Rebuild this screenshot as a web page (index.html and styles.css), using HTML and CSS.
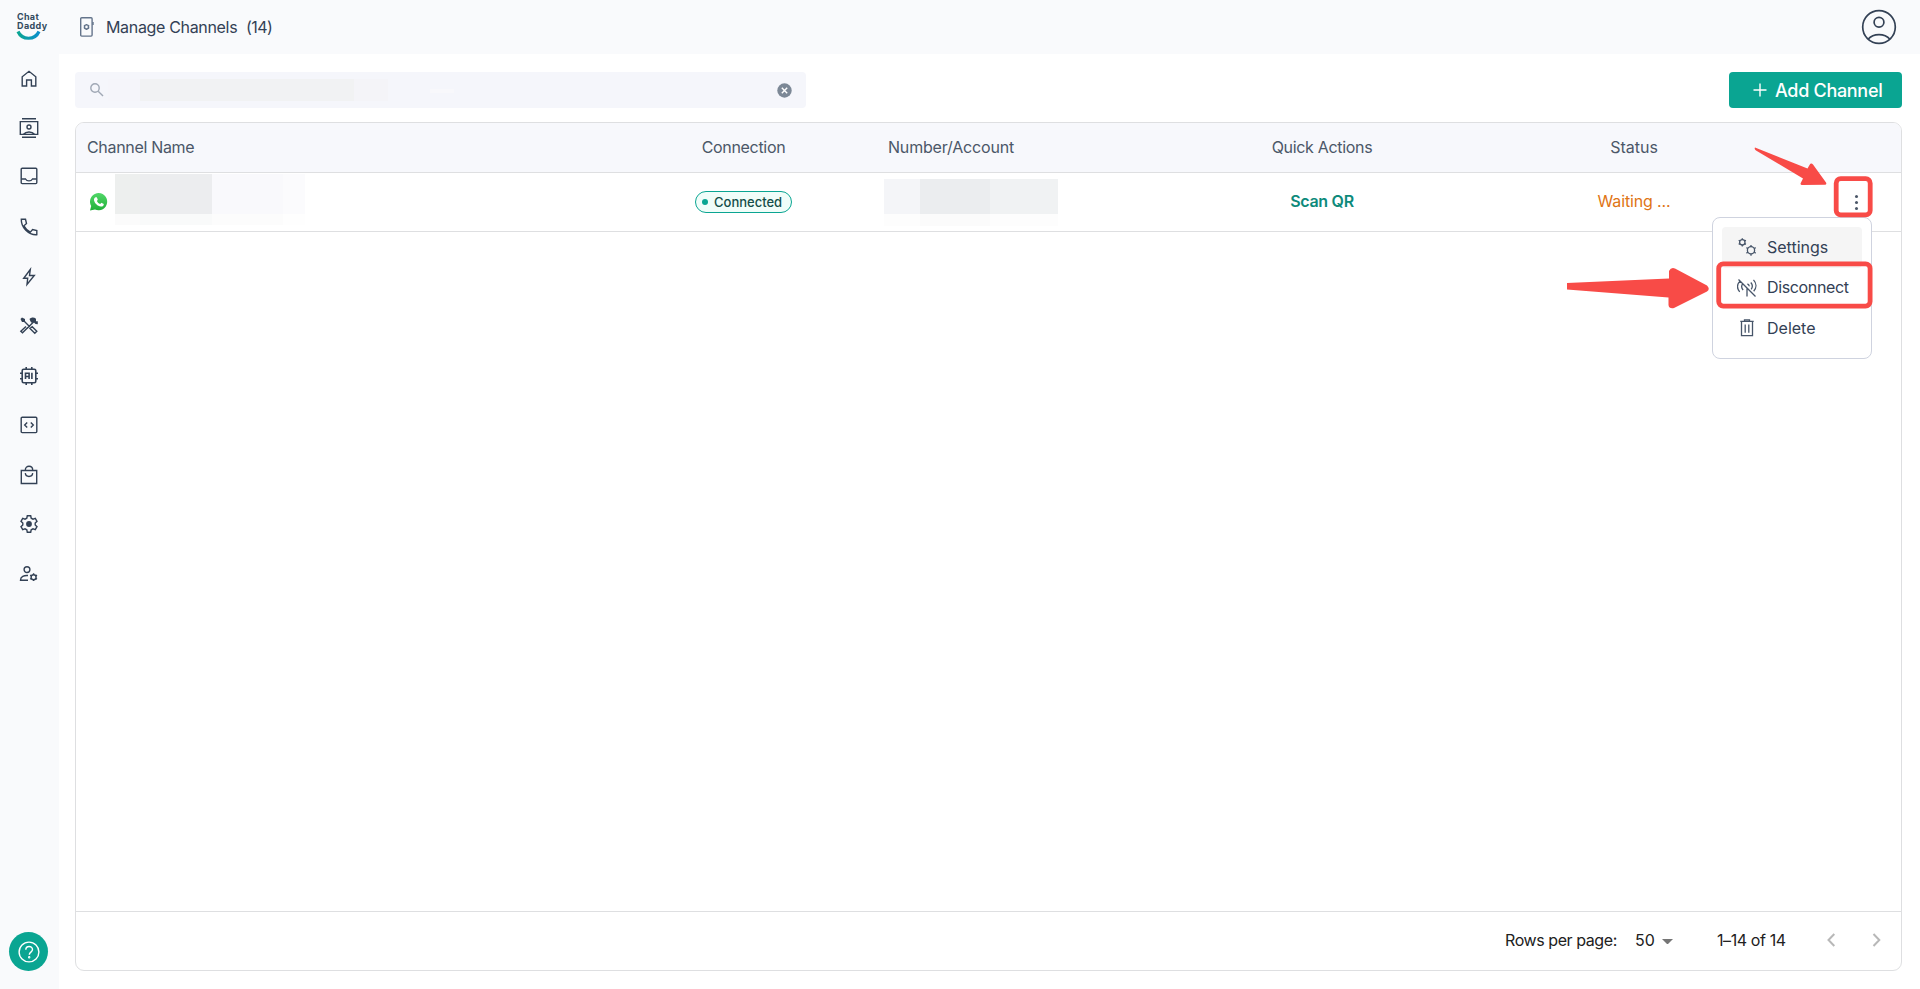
FILE: index.html
```html
<!DOCTYPE html>
<html lang="en">
<head>
<meta charset="utf-8">
<title>Manage Channels</title>
<link rel="stylesheet" href="styles.css">
</head>
<body>
<div class="app">
  <aside class="sidebar">
    <div class="logo">
      <span class="logo-chat">Chat</span>
      <span class="logo-daddy">Daddy</span>
      <svg class="smile" width="26" height="11" viewBox="0 0 26 11"><defs><linearGradient id="g"><stop offset="0" stop-color="#0aa592"/><stop offset="1" stop-color="#0c8fcb"/></linearGradient></defs><path d="M2 1.500C6 10.500 19 10.500 23 1.500" fill="none" stroke="url(#g)" stroke-width="3.200"/></svg>
    </div>
    <nav class="nav">
      <a class="item"><svg viewBox="0 0 20 20"><path d="M3.200 17V7.800L10 2.300l6.800 5.500V17h-4.400v-6H7.600v6z"/></svg></a>
      <a class="item contacts"><svg viewBox="0 0 20 20"><path d="M3 .8h14M3 19.200h14M1.300 3.600h17.400v12.800H1.300zM4.500 16.200c2.500-3 8.500-3 11 0"/><circle cx="10" cy="9" r="2"/></svg></a>
      <a class="item inbox"><svg viewBox="0 0 20 20"><rect x="2.200" y="2.200" width="15.600" height="15.400" rx="1"/><path d="M2.200 13h4.300c1.500 2.500 5.500 2.500 7 0h4.300"/></svg></a>
      <a class="item"><svg viewBox="0 0 20 20"><path d="M2.300 2.300h4.200l1 4.300-2.600 2.200a15 15 0 0 0 6.400 6.300l2.300-2.600 4.200 1v4.200C9.500 18.200 2 10.500 2.300 2.300z"/></svg></a>
      <a class="item"><svg viewBox="0 0 20 20"><path d="M11.300 2.500L4.700 11.300h4L8 17.500l7.300-9h-4.800z"/></svg></a>
      <a class="item"><svg viewBox="0 0 20 20"><path d="M4.500 4.500L11 11M15 5.500l-7 7M8.800 11.500l-5.300 5.300-1.700-1.600L7 10.500M11 12.500l4.800 4.800 2-2-4.600-4.500z"/><path class="solid" d="M1.500 3L3 1.500 6 3v2l-1 1H3zM10.500 3c2-2 4.500-2 6.500-.2v2.400h1.800v3L16.500 8l-2-2-1.500 1-1.500-1.500z"/></svg></a>
      <a class="item chip-icon"><svg viewBox="0 0 20 20"><rect x="3.200" y="3.200" width="13.600" height="13.600" rx="1.500"/><path d="M7.200 1v2M12.800 1v2M7.200 17v2M12.800 17v2M1 7.200h2M1 12.800h2M17 7.200h2M17 12.800h2"/><path d="M6.500 13V7.200h3.600V13M6.500 10.500h3.600M12.900 6.800V13"/></svg></a>
      <a class="item"><svg viewBox="0 0 20 20"><rect x="2.200" y="2.200" width="15.600" height="15.400" rx="1"/><path d="M8.200 7.400L5.700 9.900l2.500 2.500M11.800 7.400l2.500 2.500-2.500 2.500"/></svg></a>
      <a class="item"><svg viewBox="0 0 20 20"><path d="M2.300 5.500h15.400v13H2.300zM6.300 5.200c0-5.200 7.400-5.200 7.400 0M6.300 8.200c.5 4.300 6.900 4.300 7.400 0"/></svg></a>
      <a class="item"><svg viewBox="0 0 20 20"><path d="M8.300 1.800h3.400l.5 2.400 1.800 1 2.300-.8L18 7.300 16.200 9v2l1.800 1.700-1.700 2.900-2.300-.8-1.800 1-.5 2.400H8.300l-.5-2.400-1.800-1-2.300.8L2 12.700 3.800 11V9L2 7.300l1.700-2.900 2.300.8 1.800-1z"/><circle class="solid" cx="10" cy="10" r="2.900"/></svg></a>
      <a class="item"><svg viewBox="0 0 20 20"><circle cx="8" cy="5.600" r="2.900"/><path d="M9 11.500c-4-.3-7.500 1-7.500 4.700H9"/><circle cx="14.600" cy="13.200" r="2.500"/><path d="M14.600 9.300v1.300M14.600 15.800v1.300M11.200 11.200l1.200.7M16.800 14.500l1.200.7M11.200 15.200l1.200-.7M16.800 11.900l1.200-.7"/></svg></a>
    </nav>
    <div class="help"><svg width="22" height="22" viewBox="0 0 22 22"><circle cx="11" cy="11" r="9.900"/><path d="M7.800 8.700c0-4.300 6.700-4.200 6.700-.2 0 2.500-3.200 2.700-3.200 5.200"/><circle cx="11.200" cy="16.200" r=".5"/></svg></div>
  </aside>
  <div class="main">
    <header class="topbar">
      <svg class="device" width="16" height="22" viewBox="0 0 16 22"><rect x="1.700" y="1.700" width="11.400" height="18.400" rx="1"/><path d="M14 6v3"/><circle cx="7.500" cy="10.900" r="2"/><path d="M7.500 7.900v1M7.500 12.900v1M4.900 9.400l.9.500M9.300 11.900l.9.500M4.900 12.400l.9-.5M9.300 9.900l.9-.5"/></svg>
      <h1 class="title">Manage Channels</h1>
      <span class="count">(14)</span>
      <svg class="avatar" width="36" height="36" viewBox="0 0 36 36"><circle cx="18" cy="18" r="16.300"/><circle cx="18" cy="13.300" r="4.900"/><path d="M7 30.200c5.500-6 16.500-6 22 0"/></svg>
    </header>
    <main class="content">
      <div class="toolbar">
        <div class="search">
          <svg width="14" height="14" viewBox="0 0 14 14"><circle cx="5" cy="5" r="4.200"/><path d="M8.200 8.200l4.800 4.800"/></svg>
          <div class="mask mask-search"><i></i><i></i><i></i><i></i></div>
          <svg class="clear" width="15" height="15" viewBox="0 0 15 15"><circle cx="7.500" cy="7.500" r="7.200"/><path d="M4.800 4.800l5.400 5.400M10.200 4.800l-5.400 5.400"/></svg>
        </div>
        <button class="add"><svg width="14" height="14" viewBox="0 0 14 14"><path d="M7 .5v13M.5 7h13"/></svg><span>Add Channel</span></button>
      </div>
      <section class="table">
        <div class="row head">
          <div class="cell"><span class="t-name">Channel Name</span></div>
          <div class="cell mid"><span class="t-conn">Connection</span></div>
          <div class="cell"><span class="t-num">Number/Account</span></div>
          <div class="cell mid"><span class="t-quick">Quick Actions</span></div>
          <div class="cell mid"><span class="t-status">Status</span></div>
          <div></div>
        </div>
        <div class="row data">
          <div class="cell name">
            <svg width="20" height="20" viewBox="0 0 20 20"><defs><linearGradient id="w" x2="0" y2="1"><stop stop-color="#52d769"/><stop offset="1" stop-color="#20b038"/></linearGradient></defs><path d="M1 18.600l1.200-4.500A8.600 8.600 0 1 1 6 17.500z" fill="url(#w)"/><path d="M6.500 5.300h1.300l1 2.400-.9 1.300c.7 1.500 1.800 2.500 3.300 3.100l1.200-1.300 2.400 1.200c0 2-1.600 2.700-3 2.500-3.300-.5-6.200-3.300-6.800-6.300-.2-1.300.4-2.400 1.500-2.900z" fill="#fff"/></svg>
            <div class="mask mask-name"><i></i><i></i><i></i><i></i></div>
          </div>
          <div class="cell mid"><span class="chip"><i class="dot"></i><span class="t-chip">Connected</span></span></div>
          <div class="cell number"><div class="mask mask-number"><i></i><i></i><i></i></div></div>
          <div class="cell mid"><a class="scan">Scan QR</a></div>
          <div class="cell mid"><span class="waiting">Waiting ...</span></div>
          <div class="more"><i></i><i></i><i></i></div>
        </div>
        <div class="body"></div>
        <footer class="pager">
          <span class="t-rows">Rows per page:</span>
          <span class="t-size">50</span>
          <i class="caret"></i>
          <span class="t-range">1–14 of 14</span>
          <svg class="prev" width="9" height="14" viewBox="0 0 9 14"><path d="M7.300 1L1.500 7l5.800 6"/></svg>
          <svg class="next" width="9" height="14" viewBox="0 0 9 14"><path d="M1.500 1l5.800 6-5.800 6"/></svg>
        </footer>
      </section>
    </main>
  </div>
</div>
<div class="menu">
  <div class="entry active"><svg viewBox="0 0 20 20"><circle cx="5.300" cy="5.300" r="2.700"/><circle cx="14" cy="13.300" r="3.600"/><path d="M5.300 1.200v1.500M5.300 8v1.500M1.700 3.200l1.300.8M7.600 6.600l1.300.8M1.700 7.400L3 6.600M7.600 4l1.300-.8M14 8v1.700M14 17v1.700M9.400 10.600l1.500.9M17.200 15.200l1.500.9M9.400 16.100l1.500-.9M17.200 11.500l1.500-.9"/></svg><span class="t-set">Settings</span></div>
  <div class="entry"><svg viewBox="0 0 20 20"><path d="M1.500 1.500l17 17M3.200 2.900C-.3 6.500-.1 10.500 2.700 13.800M6 5.500c-2 2-1.600 4.300.1 6.500M16.500 1.900c3.200 3.500 3.200 8 .2 11.300M13.800 4.500c2 2.300 2 4.500.4 6.800M10 10v8.500M10.300 6.100c1.300.1 2 1.200 1.600 2.200"/></svg><span class="t-dis">Disconnect</span></div>
  <div class="entry"><svg viewBox="0 0 20 20"><path d="M3.300 3.400h13.400M7.500 3V1.900h5V3M4.500 3.600v14h11v-14M8.200 6.500v8.300M11.800 6.500v8.300"/></svg><span class="t-del">Delete</span></div>
</div>
<svg class="marks" width="320" height="180" viewBox="1560 140 320 180">
  <rect x="1836.200" y="178.700" width="34" height="36.200" rx="4.500"/>
  <rect x="1718.700" y="263.900" width="151.400" height="42.200" rx="4.500"/>
  <path d="M1755 147.500Q1754 149 1756 150.500L1803 178.500L1800.500 183.500Q1800.500 185 1802 185L1825 184.700Q1827 184.500 1826 182.500L1813 164.500Q1811 162.500 1809.500 165L1807.500 168.500Z"/>
  <path d="M1567 283L1669 278.500V271Q1671 267 1675 268.500L1707 285.500Q1710.500 289 1707 291.500L1674 308Q1669 309 1668.500 305V297.500L1567 289.500Z"/>
</svg>
</body>
</html>
```
FILE: styles.css
```css
* { box-sizing: border-box; }
body { margin: 0; font-family: Inter, "Liberation Sans", sans-serif; font-size: 16px; color: #334155; background: #fff; overflow: hidden; }
svg { display: block; flex: none; fill: none; stroke: currentColor; stroke-width: 1.4; }
i { display: block; }
span, a { white-space: nowrap; }
.app { display: flex; height: 989px; }
.sidebar { width: 59px; background: #f9fafc; display: flex; flex-direction: column; }
.logo { height: 54px; padding: 13px 0 0 17px; display: flex; flex-direction: column; font-weight: 700; font-size: 9px; line-height: 8.500px; color: #334b5f; }
.logo-chat { letter-spacing: .3px; }
.logo-daddy { letter-spacing: .4px; }
.smile { margin-top: 0; margin-left: -1px; }
.nav { display: flex; flex-direction: column; }
.item { height: 49.500px; display: flex; align-items: center; justify-content: center; padding-right: 1px; color: #334155; }
.item svg { width: 20px; height: 20px; }
.contacts { padding-bottom: 1px; }
.inbox { padding-bottom: 4px; }
.chip-icon svg { stroke-width: 1.600; }
.solid { fill: currentColor; stroke: none; }
.help { margin: auto 0 18px 9px; width: 39px; height: 39px; border-radius: 50%; background: #0aa592; color: #fff; display: flex; align-items: center; justify-content: center; }
.main { flex: 1; display: flex; flex-direction: column; }
.topbar { height: 54px; background: #f9fafc; display: flex; align-items: center; padding: 0 23px 0 20px; }
.device { color: #64748b; }
.title { margin: 0 0 0 11px; width: 140px; font-size: 16px; font-weight: 400; white-space: nowrap; letter-spacing: -.33px; }
.count { font-size: 16px; letter-spacing: -.6px; }
.avatar { margin-left: auto; stroke-width: 1.700; }
.content { padding: 18px 18px 18px 16px; flex: 1; display: flex; flex-direction: column; gap: 14px; }
.toolbar { display: flex; justify-content: space-between; }
.search { width: 731px; height: 36px; border-radius: 4px; background: #f5f6fb; display: flex; align-items: center; padding: 0 14px 0 15px; color: #a0a8b5; }
.clear { margin-left: auto; color: #fff; }
.clear circle { fill: #7c8896; stroke: none; }
.mask { display: grid; }
.mask-search { margin-left: 4px; grid-template-columns: 32px 214px 34px 24px; column-gap: 0; height: 22px; }
.mask-search i:nth-child(1) { background: #f5f5fa; }
.mask-search i:nth-child(2) { background: #f1f2f3; }
.mask-search i:nth-child(3) { background: #f4f4f8; }
.mask-search i:nth-child(4) { background: #f8f8fb; height: 4px; margin-top: 10px; transform: translateX(42px); }
.add { width: 173px; height: 36px; border: 0; border-radius: 4px; background: #0aa592; color: #fff; display: flex; align-items: center; padding: 0 0 0 24px; gap: 8px; font: 500 18px Inter, sans-serif; letter-spacing: -.3px; }
.table { flex: 1; border: 1px solid #dedfe1; border-radius: 9px; display: flex; flex-direction: column; overflow: hidden; }
.row { display: grid; grid-template-columns: 534px 267px 267px 356px 268px 133px; border-bottom: 1px solid #dedfe1; }
.head { height: 50px; background: #f7f8fc; color: #4b5768; }
.head .cell { padding-bottom: 1px; }
.t-name, .t-conn, .t-quick { letter-spacing: -.32px; }
.t-num { letter-spacing: -.18px; }
.data { height: 59px; }
.cell { display: flex; align-items: center; padding: 0 12px 0 11px; }
.mid { justify-content: center; padding: 0; }
.name svg { margin: 0 6px 0 2px; stroke: none; }
.mask-name { align-self: flex-start; margin-top: 1px; grid-template-columns: 25px 72px 71px 22px; height: 51px; grid-template-rows: 51px; }
.mask-name i { background: linear-gradient(#ecedef 40px, #f9fafa 40px); }
.mask-name i:nth-child(1) { background: linear-gradient(#edefee 40px, #fbfbfb 40px); }
.mask-name i:nth-child(3) { background: linear-gradient(#f9f9fc 40px, #fcfcfc 40px); }
.mask-name i:nth-child(4) { background: linear-gradient(#fbfbfd 40px, #fefefe 40px); }
.number { padding-left: 7px; }
.mask-number { align-self: flex-start; margin-top: 6px; grid-template-columns: 36px 70px 68px; grid-template-rows: 47px; }
.mask-number i:nth-child(1) { background: linear-gradient(#f4f5f8 35px, #fdfdfd 35px); }
.mask-number i:nth-child(2) { background: linear-gradient(#ebedef 35px, #fbfbfb 35px); }
.mask-number i:nth-child(3) { background: linear-gradient(#f0f2f3 35px, #fdfdfd 35px); }
.chip { width: 97px; height: 22px; border: 1px solid #0aa592; border-radius: 11px; background: #f0fdf9; display: flex; align-items: center; padding-left: 6px; gap: 6px; color: #134e48; font-size: 13px; font-weight: 500; }
.t-chip { padding-bottom: 1px; }
.dot { width: 6px; height: 6px; border-radius: 50%; background: #0aa592; }
.scan { color: #0d8a7b; font-weight: 600; letter-spacing: -.3px; padding-bottom: 2px; }
.waiting { color: #e07414; letter-spacing: -.15px; padding-bottom: 2px; }
.more { display: flex; flex-direction: column; gap: 3px; align-self: center; justify-self: end; margin-right: 43px; }
.more i { width: 3px; height: 3px; border-radius: 50%; background: #4b5768; }
.body { flex: 1; }
.pager { height: 59px; border-top: 1px solid #dedfe1; display: flex; align-items: center; padding: 0 20px 2px 0; justify-content: flex-end; color: #212121; }
.t-rows { width: 130px; letter-spacing: -.42px; }
.t-size { width: 27px; }
.caret { border: 5.500px solid transparent; border-top-color: #757575; border-bottom: 0; width: 11px; margin-right: 44px; margin-top: 3px; }
.t-range { width: 110px; letter-spacing: -.4px; }
.pager svg { color: #b8b8b8; stroke-width: 2; }
.next { margin-left: 36px; }
.menu { position: absolute; left: 1712px; top: 217px; width: 160px; height: 142px; border: 1px solid #cfd3df; border-radius: 8px; background: #fff; padding: 9px; }
.entry { height: 40.500px; border-radius: 4px; display: flex; align-items: center; padding-left: 15px; gap: 10px; }
.entry svg { width: 20px; height: 20px; stroke-width: 1.300; color: #475569; }
.t-dis { letter-spacing: -.35px; padding-bottom: 1px; }
.active { background: #f5f5f5; }
.marks { position: absolute; left: 1560px; top: 140px; stroke: none; }
.marks rect { stroke: #f84b47; stroke-width: 4.800; }
.marks path { fill: #f84b47; }
```
